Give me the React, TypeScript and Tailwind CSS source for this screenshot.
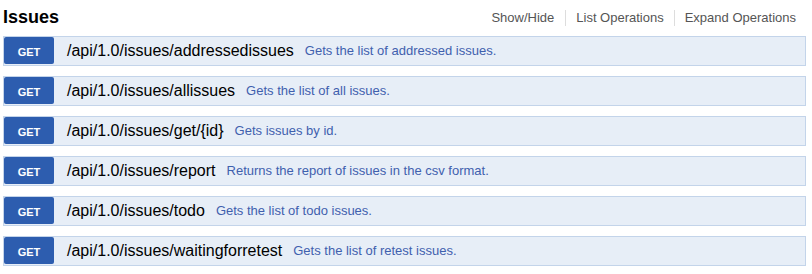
const endpoints = [
  { path: "/api/1.0/issues/addressedissues", summary: "Gets the list of addressed issues." },
  { path: "/api/1.0/issues/allissues", summary: "Gets the list of all issues." },
  { path: "/api/1.0/issues/get/{id}", summary: "Gets issues by id." },
  { path: "/api/1.0/issues/report", summary: "Returns the report of issues in the csv format." },
  { path: "/api/1.0/issues/todo", summary: "Gets the list of todo issues." },
  { path: "/api/1.0/issues/waitingforretest", summary: "Gets the list of retest issues." },
]

export default function App() {
  return (
    <div className="w-[812px] h-[274px] bg-white font-['Liberation_Sans',Arial,sans-serif] overflow-hidden">
      {/* Resource heading */}
      <div className="flex items-center justify-between h-[36px] pl-[3px] pr-[6px] pb-[2px]">
        <h2 className="text-[18px] font-bold text-black">Issues</h2>
        <ul className="flex items-center pt-[2px] text-[13px] text-[#555]">
          <li className="px-[11px] leading-[16px]">Show/Hide</li>
          <li className="px-[10px] leading-[16px] border-l border-[#ddd]">List Operations</li>
          <li className="px-[10px] leading-[16px] border-l border-[#ddd]">Expand Operations</li>
        </ul>
      </div>

      {/* Operations */}
      <div className="flex flex-col gap-[10px] pl-[3px]">
        {endpoints.map((op) => (
          <div
            key={op.path}
            className="flex items-center w-[803px] h-[30px] border border-[#c3d4ea] bg-[#e7eef7]"
          >
            <span className="self-start flex items-center justify-center w-[50px] h-[27px] pt-[3px] rounded-[2px] bg-[#2d5daf] text-white text-[11px] font-bold">
              GET
            </span>
            <span className="ml-[13px] text-[16px] text-black">{op.path}</span>
            <span className="ml-[11px] text-[13px] text-[#3f60ae]">{op.summary}</span>
          </div>
        ))}
      </div>
    </div>
  )
}
